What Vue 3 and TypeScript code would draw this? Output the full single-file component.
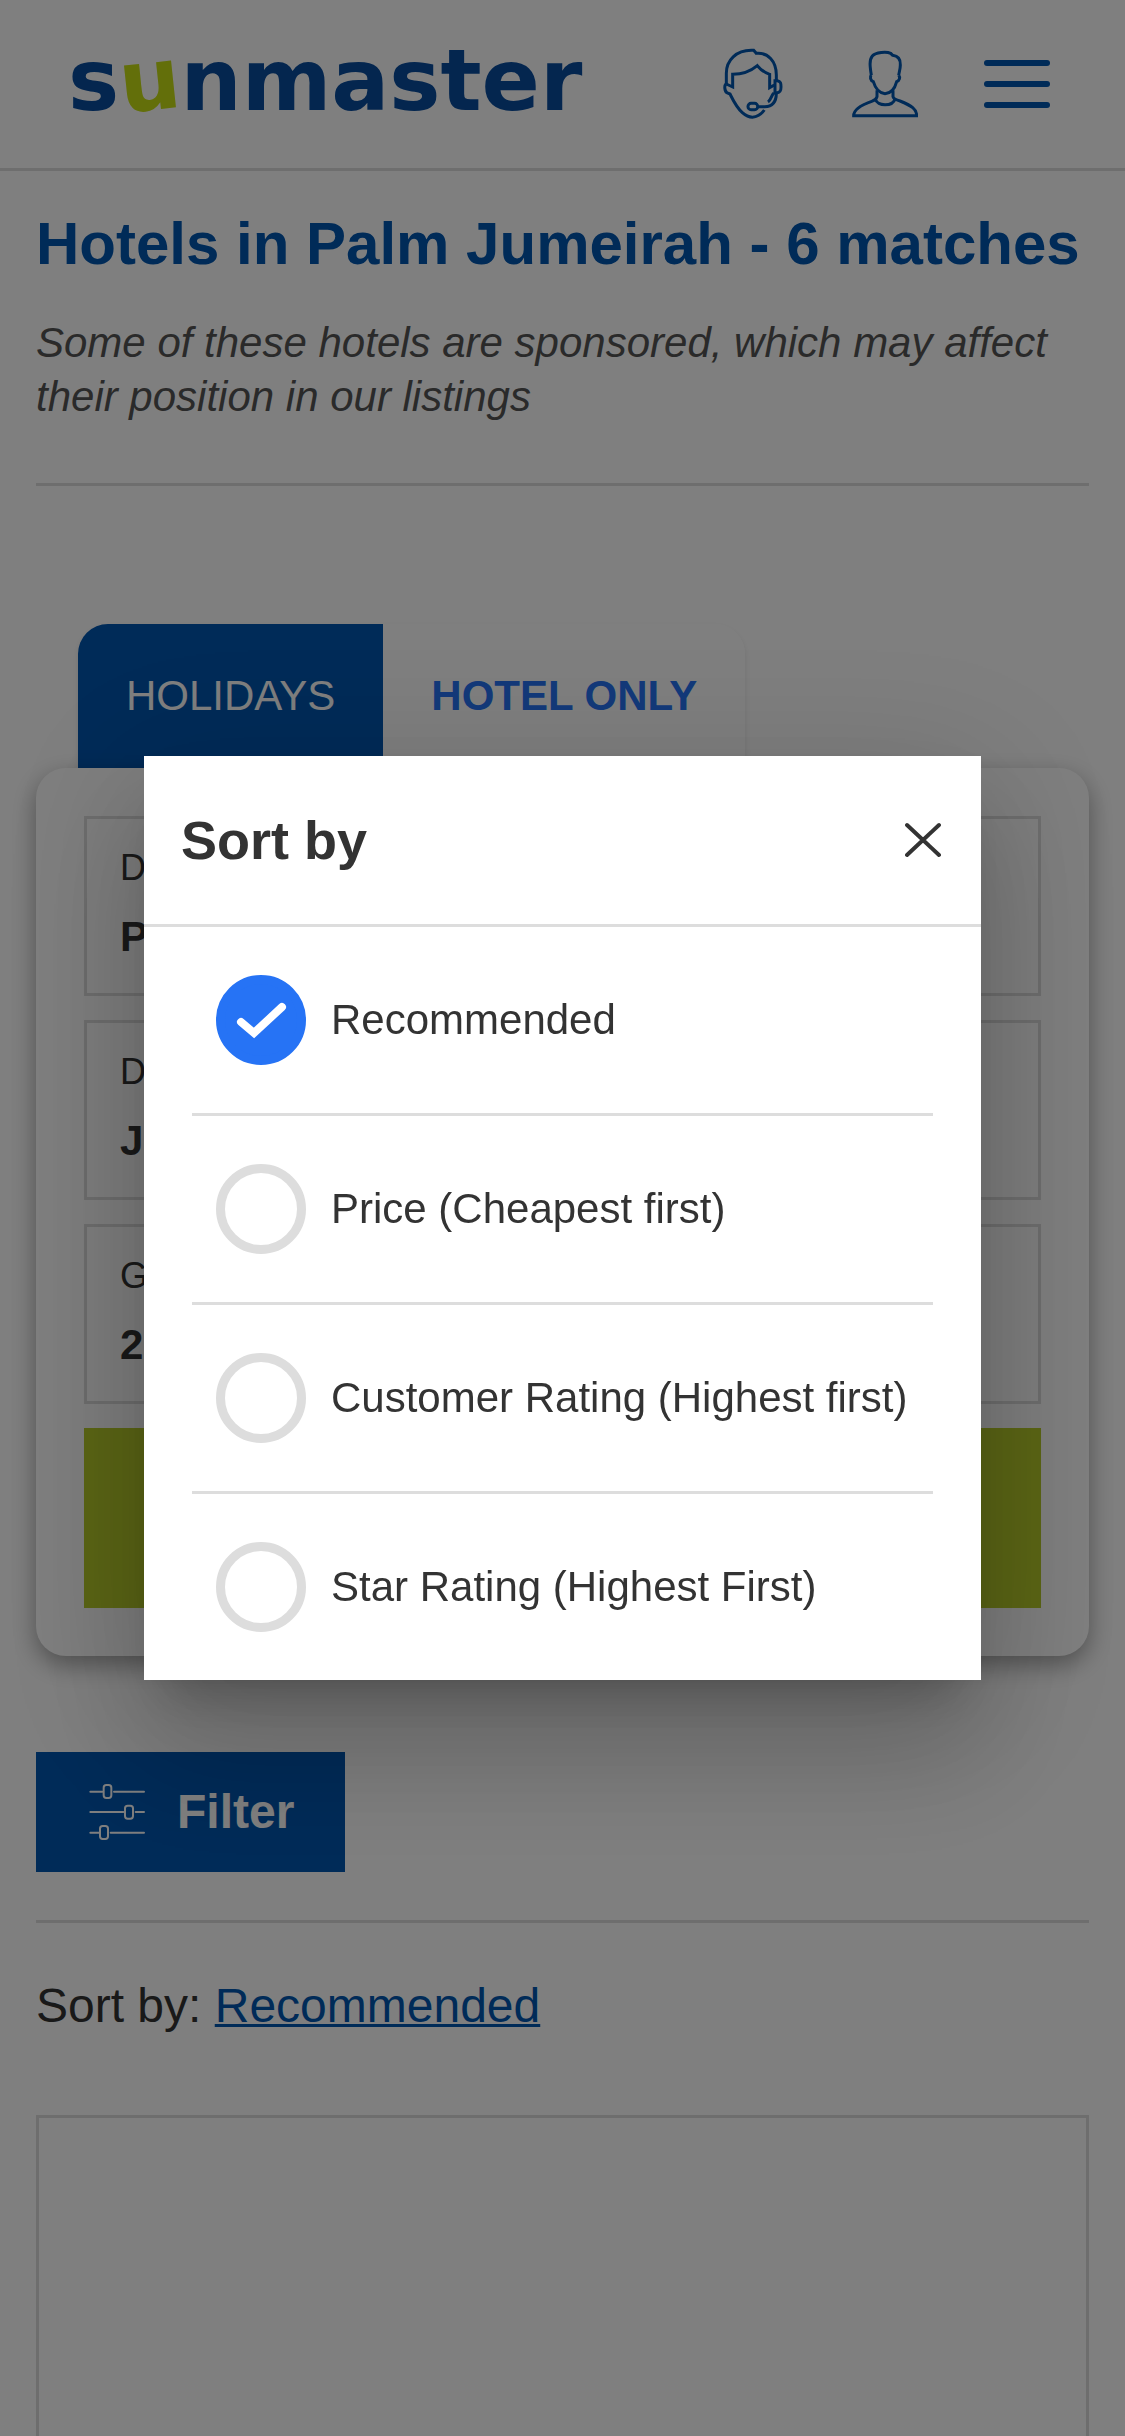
<script setup lang="ts">
import { ref } from 'vue'

interface Option {
  id: string
  label: string
}

interface Field {
  label: string
  value: string
}

const options: Option[] = [
  { id: 'recommended', label: 'Recommended' },
  { id: 'price', label: 'Price (Cheapest first)' },
  { id: 'customer', label: 'Customer Rating (Highest first)' },
  { id: 'star', label: 'Star Rating (Highest First)' },
]

const fields: Field[] = [
  { label: 'Destination', value: 'Palm Jumeirah' },
  { label: 'Date', value: 'June' },
  { label: 'Guests', value: '2 Adults' },
]

const selected = ref('recommended')
const open = ref(true)
</script>

<template>
  <div class="page">
    <header class="header">
      <a class="logo" href="#" aria-label="sunmaster">s<span class="logo-u">u</span>nmaster</a>
      <nav class="nav">
        <button class="icon-button" type="button" aria-label="Contact us">
          <svg width="60" height="72" viewBox="130 84 180 216" fill="none" stroke="currentColor" stroke-width="9">
            <path d="M140 192V160C140 120 170 91 215 91H222L230 100C264 97 290 122 290 165V180" />
            <path d="M140 192L159 201V163C190 163 215 152 233 137C244 150 255 158 270 163V203L284 195" />
            <path d="M140 192C133 195 134 214 143 219L151 222C160 240 170 262 188 278C205 293 222 295 237 286Q247 280 254 270" />
            <path d="M286 182H293C303 184 304 190 304 201C304 212 302 217 293 218H286Z" />
            <path d="M290 219C290 245 278 260 255 260H236" />
            <path d="M283 219C274 226 274 240 265 246" />
            <rect x="205" y="250" width="29" height="19" rx="9" />
          </svg>
        </button>
        <button class="icon-button" type="button" aria-label="My account">
          <svg width="66" height="68" viewBox="516 90 198 204" fill="none" stroke="currentColor" stroke-width="9">
            <path d="M574 166C570 140 567 120 577 108C587 96 620 94 632 100L638 106C655 108 662 118 661 135C661 148 657 158 656 166" />
            <path d="M574 165C569 170 571 182 580 185C587 208 600 220 615 221C631 220 644 208 650 185C659 182 661 172 656 166" />
            <path d="M591 211V230Q589 239 575 244C535 258 521 272 521 287H710C710 268 695 257 660 243Q641 238 639 230V211" />
            <path d="M586 237C592 260 638 260 645 237" />
          </svg>
        </button>
        <button class="icon-button" type="button" aria-label="Menu">
          <svg width="66" height="48" viewBox="0 0 66 48" fill="currentColor">
            <rect width="66" height="6" rx="3" />
            <rect y="21" width="66" height="6" rx="3" />
            <rect y="42" width="66" height="6" rx="3" />
          </svg>
        </button>
      </nav>
    </header>

    <main class="main">
      <section class="intro">
        <h1 class="title">Hotels in Palm Jumeirah - 6 matches</h1>
        <p class="note">Some of these hotels are sponsored, which may affect their position in our listings</p>
      </section>

      <section class="search">
        <div class="tabs">
          <button class="tab tab-active" type="button">HOLIDAYS</button>
          <button class="tab" type="button">HOTEL ONLY</button>
        </div>
        <form class="panel" @submit.prevent>
          <button v-for="field in fields" :key="field.label" class="field" type="button">
            <span class="field-label">{{ field.label }}</span>
            <span class="field-value">{{ field.value }}</span>
          </button>
          <button class="submit" type="submit" aria-label="Search"></button>
        </form>
      </section>

      <section class="filters">
        <button class="filter" type="button">
          <svg width="56" height="56" viewBox="267 1152 168 168" fill="none" stroke="currentColor" stroke-width="6" stroke-linecap="round">
            <path d="M271 1175H307M342 1175H432M271 1236H370M407 1236H432M271 1298H297M332 1298H432" />
            <rect x="311" y="1155" width="23" height="39" rx="8" />
            <rect x="375" y="1217" width="24" height="39" rx="8" />
            <rect x="300" y="1278" width="24" height="39" rx="8" />
          </svg>
          Filter
        </button>
      </section>

      <p class="sort">Sort by: <a class="sort-link" href="#" @click.prevent="open = true">Recommended</a></p>
      <article class="result"></article>
    </main>

    <div v-if="open" class="overlay">
      <div class="dialog" role="dialog" aria-modal="true" aria-labelledby="dialog-title">
        <div class="dialog-head">
          <h2 id="dialog-title" class="dialog-title">Sort by</h2>
          <button class="close" type="button" aria-label="Close" @click="open = false">
            <svg width="36" height="36" viewBox="0 0 36 36" stroke="currentColor" stroke-width="4" stroke-linecap="round">
              <path d="M2 3L34 33M34 3L2 33" />
            </svg>
          </button>
        </div>
        <div class="options">
          <label v-for="option in options" :key="option.id" class="option" :for="option.id">
            <span class="radio-box">
              <input :id="option.id" v-model="selected" class="radio" type="radio" name="sort" :value="option.id" />
              <svg v-if="selected === option.id" class="tick" viewBox="0 0 90 90" fill="none" stroke="#fff" stroke-width="8" stroke-linecap="round">
                <path d="M25 47L38 58L66 32" />
              </svg>
            </span>
            {{ option.label }}
          </label>
        </div>
      </div>
    </div>
  </div>
</template>

<style>
body {
  margin: 0;
  background: #fff;
}
</style>

<style scoped>
.page {
  display: flex;
  flex-direction: column;
  min-height: 100vh;
  font-family: "Liberation Sans", Arial, sans-serif;
  font-size: 42px;
  line-height: 48px;
  color: #333;
  background: #fff;
}

.page *,
.page {
  box-sizing: border-box;
}

button {
  padding: 0;
  border: 0;
  background: none;
  font: inherit;
  color: inherit;
  cursor: pointer;
}

svg {
  display: block;
}

.header {
  display: flex;
  align-items: center;
  justify-content: space-between;
  padding: 0 75px 0 68px;
  height: 171px;
  border-bottom: 3px solid #ddd;
}

.logo {
  padding-bottom: 8px;
  font-family: "DejaVu Sans", sans-serif;
  font-size: 86px;
  font-weight: 700;
  line-height: 120px;
  color: #084c9e;
  text-decoration: none;
}

.logo-u {
  display: inline-block;
  color: #c6de14;
  transform: rotate(-6deg);
}

.nav {
  display: flex;
  gap: 66px;
}

.icon-button {
  display: flex;
  align-items: center;
  justify-content: center;
  width: 66px;
  height: 72px;
  color: #0056b0;
}

.main {
  display: flex;
  flex: 1;
  flex-direction: column;
  padding: 0 36px;
}

.intro {
  padding: 37px 0 59px;
  border-bottom: 3px solid #ddd;
}

.title {
  margin: 0 0 36px;
  font-size: 60px;
  line-height: 72px;
  font-weight: 700;
  color: #0056b0;
}

.note {
  margin: 0;
  line-height: 54px;
  font-style: italic;
  color: #555;
}

.search {
  margin-top: 138px;
}

.tabs {
  display: flex;
  width: fit-content;
  margin-left: 42px;
  border-radius: 30px 30px 0 0;
  box-shadow: 0 3px 6px rgba(0, 0, 0, 0.1);
  overflow: hidden;
}

.tab {
  height: 144px;
  padding: 0 48px;
  font-weight: 700;
  color: #2673f5;
  background: #fff;
}

.tab-active {
  font-weight: 400;
  color: #fff;
  background: #0056b0;
}

.panel {
  position: relative;
  display: flex;
  flex-direction: column;
  gap: 24px;
  padding: 48px;
  border-radius: 30px;
  background: #fff;
  box-shadow: 0 9px 24px rgba(0, 0, 0, 0.36);
}

.field {
  display: flex;
  flex-direction: column;
  justify-content: center;
  gap: 21px;
  height: 180px;
  padding: 0 33px 8px;
  border: 3px solid #ddd;
  text-align: left;
}

.field-label {
  font-size: 36px;
}

.field-value {
  font-weight: 700;
}

.submit {
  height: 180px;
  background: #b8cd2a;
}

.filters {
  padding: 96px 0 48px;
  border-bottom: 3px solid #ddd;
}

.filter {
  display: flex;
  align-items: center;
  gap: 32px;
  height: 120px;
  padding: 0 51px 0 53px;
  font-size: 48px;
  font-weight: 700;
  color: #fff;
  background: #0056b0;
}

.sort {
  margin: 53px 0 79px;
  font-size: 48px;
  line-height: 60px;
}

.sort-link {
  color: #0056b0;
  text-decoration-thickness: 3px;
}

.result {
  flex: 1;
  border: 3px solid #ddd;
  border-bottom: 0;
}

.overlay {
  position: fixed;
  inset: 0;
  display: flex;
  align-items: center;
  padding: 0 144px;
  background: rgba(0, 0, 0, 0.5);
}

.dialog {
  flex: 1;
  background: #fff;
  box-shadow:
    0 33px 45px -21px rgba(0, 0, 0, 0.2),
    0 72px 114px 9px rgba(0, 0, 0, 0.14),
    0 27px 138px 24px rgba(0, 0, 0, 0.12);
}

.dialog-head {
  display: flex;
  align-items: center;
  justify-content: space-between;
  height: 171px;
  padding: 0 40px 0 37px;
  border-bottom: 3px solid #ddd;
}

.dialog-title {
  margin: 0;
  font-size: 54px;
  line-height: 60px;
  font-weight: 700;
}

.options {
  padding: 0 48px;
}

.option {
  display: flex;
  align-items: center;
  gap: 25px;
  padding: 48px 24px;
  border-bottom: 3px solid #ddd;
  white-space: nowrap;
}

.option:last-child {
  border-bottom: 0;
}

.radio-box {
  display: grid;
  width: 90px;
  height: 90px;
}

.radio,
.tick {
  grid-area: 1 / 1;
  width: 90px;
  height: 90px;
}

.radio {
  margin: 0;
  appearance: none;
  border: 9px solid #ddd;
  border-radius: 50%;
}

.radio:checked {
  border-color: #2673f5;
  background: #2673f5;
}
</style>
